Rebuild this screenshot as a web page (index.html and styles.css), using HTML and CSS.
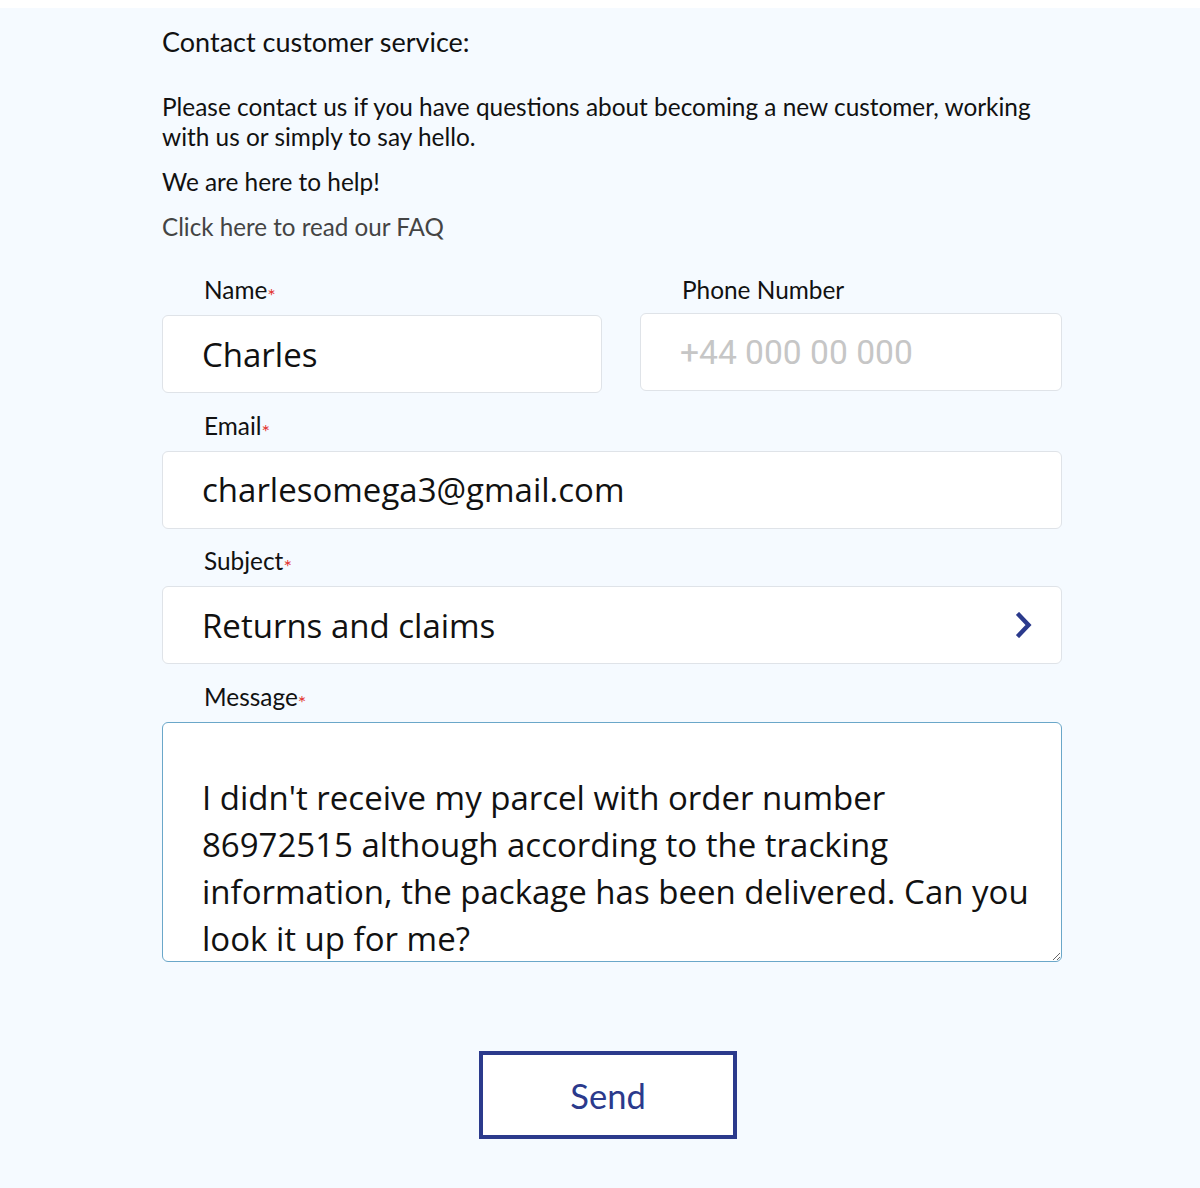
FILE: index.html
```html
<!DOCTYPE html>
<html lang="en">
<head>
<meta charset="utf-8">
<title>Contact customer service</title>
<link rel="stylesheet" href="styles.css">
</head>
<body>
<main class="page">
  <section class="content">
    <h1 class="title">Contact customer service:</h1>
    <p class="intro">Please contact us if you have questions about becoming a new customer, working with us or simply to say hello.</p>
    <p class="help">We are here to help!</p>
    <a class="faq" href="#">Click here to read our FAQ</a>

    <form class="form">
      <div class="row two">
        <div class="field">
          <label class="label">Name<span class="req">*</span></label>
          <div class="input name-input">Charles</div>
        </div>
        <div class="field">
          <label class="label">Phone Number</label>
          <div class="input phone-input placeholder">+44 000 00 000</div>
        </div>
      </div>
      <div class="field">
        <label class="label">Email<span class="req">*</span></label>
        <div class="input">charlesomega3@gmail.com</div>
      </div>
      <div class="field">
        <label class="label">Subject<span class="req">*</span></label>
        <div class="input select">
          <span>Returns and claims</span>
          <svg class="chev" width="16" height="26" viewBox="0 0 16 26"><path d="M3 3 L12.5 13 L3 23" fill="none" stroke="#2b3a8c" stroke-width="4.4" stroke-linecap="square" stroke-linejoin="miter"/></svg>
        </div>
      </div>
      <div class="field">
        <label class="label">Message<span class="req">*</span></label>
        <textarea class="message">

I didn't receive my parcel with order number 86972515 although according to the tracking information, the package has been delivered. Can you look it up for me?</textarea>
      </div>
      <div class="actions">
        <button type="button" class="send">Send</button>
      </div>
    </form>
  </section>
</main>
</body>
</html>
```
FILE: styles.css
```css
html, body {
  margin: 0;
  padding: 0;
  background: #ffffff;
}
.page {
  margin-top: 8px;
  background: #f5faff;
  min-height: 1180px;
  font-family: "Lato", "Noto Sans", sans-serif;
  color: #111;
}
.content {
  width: 900px;
  margin: 0 0 0 162px;
  padding-top: 19px;
}
.title {
  margin: 0;
  font-size: 27px;
  font-weight: 400;
  line-height: 30px;
}
.intro {
  margin: 35px 0 0;
  font-size: 24.4px;
  line-height: 30px;
}
.help {
  margin: 15px 0 0;
  font-size: 24.4px;
  line-height: 30px;
}
.faq {
  display: block;
  margin-top: 15px;
  font-size: 24.2px;
  line-height: 30px;
  color: #444;
  text-decoration: none;
}
.form {
  margin-top: 33px;
  display: flex;
  flex-direction: column;
  gap: 17.5px;
}
.row.two {
  display: grid;
  grid-template-columns: 440px 1fr;
  column-gap: 38px;
}
.field {
  display: flex;
  flex-direction: column;
  gap: 10px;
}
.label {
  display: block;
  height: 30px;
  padding-left: 42px;
  font-size: 24.4px;
  line-height: 30px;
  color: #111;
}
.req {
  color: #e3342f;
  font-size: 20px;
  line-height: 0;
  vertical-align: -4px;
}
.input {
  box-sizing: border-box;
  height: 78px;
  background: #fff;
  border: 1px solid #dfe3e8;
  border-radius: 6px;
  padding: 0 29px 0 39px;
  display: flex;
  align-items: center;
  font-family: "Open Sans", sans-serif;
  font-size: 33px;
  color: #111;
}
.phone-input {
  margin-top: -2px;
  font-family: "Roboto", sans-serif;
  font-size: 33.6px;
}
.placeholder {
  color: #c6c6c6;
}
.select {
  justify-content: space-between;
}
.chev {
  display: block;
}
.message {
  box-sizing: border-box;
  display: block;
  width: 100%;
  height: 240px;
  margin: 0;
  background: #fff;
  border: 1px solid #6aa7c9;
  border-radius: 6px;
  padding: 4px 24px 0 39px;
  font-family: "Open Sans", sans-serif;
  font-size: 33px;
  line-height: 47px;
  color: #111;
  overflow: hidden;
  resize: vertical;
  outline: none;
}
.actions {
  display: flex;
  justify-content: center;
  margin-top: 72px;
  padding-right: 8px;
}
.send {
  box-sizing: border-box;
  width: 258px;
  height: 88px;
  background: #fff;
  border: 4px solid #2b3a8c;
  border-radius: 0;
  font-family: "Lato", sans-serif;
  font-size: 34.5px;
  color: #2b3a8c;
  cursor: pointer;
}
```
